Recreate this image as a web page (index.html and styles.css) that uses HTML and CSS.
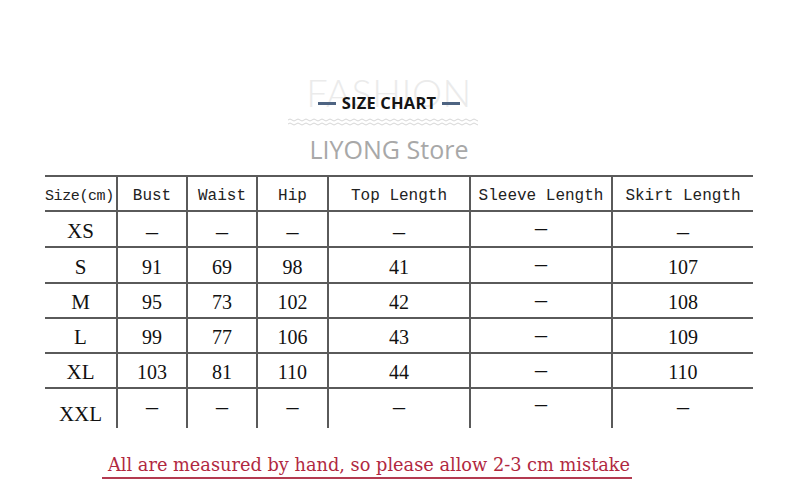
FILE: index.html
```html
<!DOCTYPE html>
<html>
<head>
<meta charset="utf-8">
<link rel="stylesheet" href="styles.css">
</head>
<body>
<div class="page">
  <header class="head">
    <div class="title">
      <div class="fashion">FASHION</div>
      <div class="chart"><span class="bar"></span><span class="chart-text">SIZE CHART</span><span class="bar"></span></div>
    </div>
    <svg class="wave" width="190" height="10" viewBox="0 0 190 10">
      <path d="M0 3 Q2 1 4 3 T8 3 T12 3 T16 3 T20 3 T24 3 T28 3 T32 3 T36 3 T40 3 T44 3 T48 3 T52 3 T56 3 T60 3 T64 3 T68 3 T72 3 T76 3 T80 3 T84 3 T88 3 T92 3 T96 3 T100 3 T104 3 T108 3 T112 3 T116 3 T120 3 T124 3 T128 3 T132 3 T136 3 T140 3 T144 3 T148 3 T152 3 T156 3 T160 3 T164 3 T168 3 T172 3 T176 3 T180 3 T184 3 T188 3 T192 3" fill="none" stroke="#d6d6d6" stroke-width="1"/>
      <path d="M0 7 Q2 5 4 7 T8 7 T12 7 T16 7 T20 7 T24 7 T28 7 T32 7 T36 7 T40 7 T44 7 T48 7 T52 7 T56 7 T60 7 T64 7 T68 7 T72 7 T76 7 T80 7 T84 7 T88 7 T92 7 T96 7 T100 7 T104 7 T108 7 T112 7 T116 7 T120 7 T124 7 T128 7 T132 7 T136 7 T140 7 T144 7 T148 7 T152 7 T156 7 T160 7 T164 7 T168 7 T172 7 T176 7 T180 7 T184 7 T188 7 T192 7" fill="none" stroke="#d6d6d6" stroke-width="1"/>
    </svg>
    <div class="store">LIYONG Store</div>
  </header>

  <table class="sizes">
    <colgroup>
      <col class="c-size"><col class="c-s"><col class="c-s"><col class="c-s2"><col class="c-l"><col class="c-l"><col class="c-l2">
    </colgroup>
    <thead>
      <tr class="hrow">
        <th class="first size-h">Size(cm)</th><th>Bust</th><th>Waist</th><th>Hip</th><th>Top Length</th><th>Sleeve Length</th><th>Skirt Length</th>
      </tr>
    </thead>
    <tbody>
      <tr class="r36"><td class="first">XS</td><td class="dash">–</td><td class="dash">–</td><td class="dash">–</td><td class="dash">–</td><td class="dash up">–</td><td class="dash">–</td></tr>
      <tr class="r36"><td class="first">S</td><td>91</td><td>69</td><td>98</td><td>41</td><td class="dash up">–</td><td>107</td></tr>
      <tr><td class="first">M</td><td>95</td><td>73</td><td>102</td><td>42</td><td class="dash up">–</td><td>108</td></tr>
      <tr><td class="first">L</td><td>99</td><td>77</td><td>106</td><td>43</td><td class="dash up">–</td><td>109</td></tr>
      <tr><td class="first">XL</td><td>103</td><td>81</td><td>110</td><td>44</td><td class="dash up">–</td><td>110</td></tr>
      <tr class="last"><td class="first">XXL</td><td class="dash up">–</td><td class="dash up">–</td><td class="dash up">–</td><td class="dash up">–</td><td class="dash up2">–</td><td class="dash up">–</td></tr>
    </tbody>
  </table>

  <p class="note"><span class="note-text">All are measured by hand, so please allow 2-3 cm mistake</span></p>
</div>
</body>
</html>
```

FILE: styles.css
```css
html, body {
  margin: 0;
  padding: 0;
  background: #ffffff;
}

.page {
  width: 800px;
  height: 500px;
  padding-top: 70px;
  box-sizing: border-box;
}

.head {
  display: flex;
  flex-direction: column;
  align-items: center;
  padding-right: 22px;
}

.title {
  position: relative;
  width: 200px;
  height: 44px;
}

.fashion {
  font-family: "Lato", sans-serif;
  font-weight: 300;
  font-size: 38px;
  line-height: 44px;
  color: #ebebeb;
  text-align: center;
  letter-spacing: 0.5px;
}

.chart {
  position: absolute;
  left: 0;
  right: 0;
  top: 23px;
  display: flex;
  align-items: center;
  justify-content: center;
  gap: 6px;
}

.chart-text {
  font-family: "Open Sans", sans-serif;
  font-weight: 700;
  font-size: 16.5px;
  line-height: 20px;
  color: #141414;
  letter-spacing: 0.2px;
}

.bar {
  display: block;
  width: 18px;
  height: 3px;
  background: #4e6482;
}

.wave {
  display: block;
  margin-top: 3px;
  margin-right: 12px;
}

.store {
  font-family: "Open Sans", sans-serif;
  font-size: 25px;
  line-height: 30px;
  color: #a8a8a8;
  margin-top: 7px;
}

.sizes {
  margin-top: 11px;
  margin-left: 45px;
  width: 708px;
  table-layout: fixed;
  border-collapse: collapse;
}

.c-size { width: 72px; }
.c-s { width: 70px; }
.c-s2 { width: 71px; }
.c-l { width: 142px; }
.c-l2 { width: 141px; }

.sizes tr {
  border-top: 2px solid #5a5a5a;
  border-bottom: 2px solid #5a5a5a;
  height: 35px;
}

.sizes tr.r36 {
  height: 36px;
}

.sizes tr.last {
  border-bottom: none;
  height: 40px;
}

.sizes th,
.sizes td {
  padding: 0;
  text-align: center;
  border-left: 2px solid #5a5a5a;
}

.sizes th.first,
.sizes td.first {
  border-left: none;
}

.sizes th {
  font-family: "Liberation Mono", "DejaVu Sans Mono", monospace;
  font-weight: normal;
  font-size: 16px;
  color: #222222;
  vertical-align: middle;
  padding-top: 5px;
}

.sizes th.size-h {
  font-size: 15px;
  letter-spacing: -0.4px;
  text-align: left;
}

.sizes td {
  font-family: "Liberation Serif", serif;
  font-size: 20px;
  color: #111111;
  vertical-align: middle;
  line-height: 22px;
  padding-top: 3px;
}

.sizes td.first {
  font-size: 21px;
}

.sizes tr.last td {
  padding-top: 10px;
}

.sizes td.dash {
  font-size: 24px;
  padding-top: 4px;
}

.sizes td.up {
  padding-top: 0;
  padding-bottom: 4px;
}

.sizes tr.last td.up {
  padding-top: 0;
  padding-bottom: 6px;
}

.sizes tr.last td.up2 {
  padding-top: 0;
  padding-bottom: 12px;
}

.note {
  margin: 26px 0 0 102px;
}

.note-text {
  display: inline-block;
  font-family: "DejaVu Serif", serif;
  font-size: 17.75px;
  line-height: 23px;
  color: #b1283f;
  padding: 0 2px 0 6px;
  border-bottom: 2px solid #b33a50;
}
```
